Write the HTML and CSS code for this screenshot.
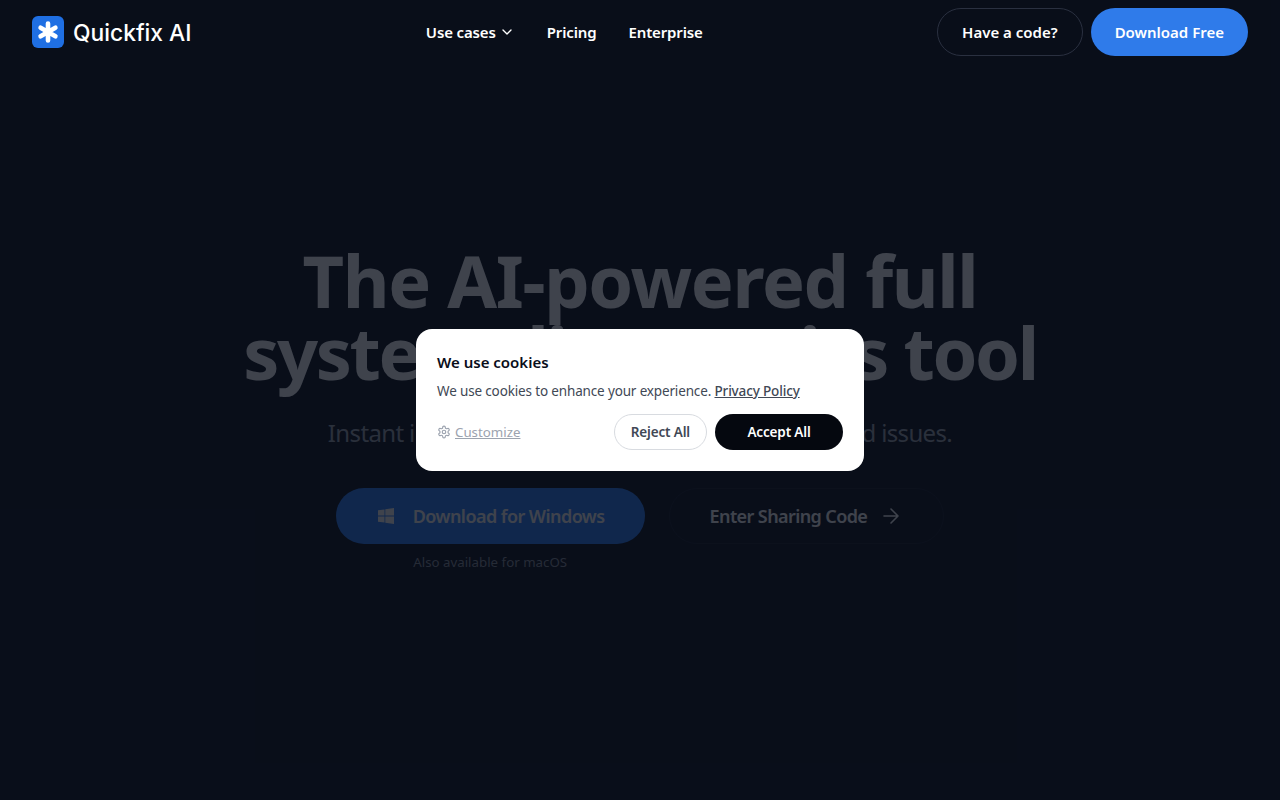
FILE: index.html
```html
<!DOCTYPE html>
<html lang="en">
<head>
<meta charset="utf-8">
<title>Quickfix AI</title>
<link rel="stylesheet" href="styles.css">
</head>
<body>
<header class="nav">
  <a class="brand">
    <svg class="logo" width="32" height="32" viewBox="0 0 32 32"><rect width="32" height="32" rx="6" fill="#1f6fe3"/><path d="M16 7.5v17M8.6 11.75l14.8 8.5M23.4 11.75l-14.8 8.5" stroke="#fff" stroke-width="4.6" stroke-linecap="round"/></svg>
    <span>Quickfix AI</span>
  </a>
  <nav class="links">
    <a class="link">Use cases
      <svg width="16" height="16" viewBox="0 0 24 24" fill="none" stroke="currentColor" stroke-width="2" stroke-linecap="round" stroke-linejoin="round"><path d="M6 9l6 6 6-6"/></svg>
    </a>
    <a class="link">Pricing</a>
    <a class="link">Enterprise</a>
  </nav>
  <div class="actions">
    <a class="btn ghost">Have a code?</a>
    <a class="btn primary">Download Free</a>
  </div>
</header>
<main class="hero">
  <h1><span class="line-one">The AI-powered full</span><span class="line-two">system diagnostics tool</span></h1>
  <p class="sub">Instant insights into hardware and software-related issues.</p>
  <div class="cta">
    <div class="cta-col">
      <a class="big blue">
        <svg width="20" height="20" viewBox="-2 -2 20 20" fill="currentColor"><path d="M0 2.3l6.5-.9v6.2H0zM7.3 1.3L16 0v7.6H7.3zM0 8.4h6.5v6.2L0 13.7zM7.3 8.4H16V16l-8.7-1.2z"/></svg>
        <span class="label-win">Download for Windows</span>
      </a>
      <span class="also">Also available for macOS</span>
    </div>
    <a class="big outline"><span class="label-code">Enter Sharing Code</span>
      <svg width="24" height="24" viewBox="0 0 24 24" fill="none" stroke="currentColor" stroke-width="1.6" stroke-linecap="round" stroke-linejoin="round"><path d="M5 12h14M12 5l7 7-7 7"/></svg>
    </a>
  </div>
</main>
<div class="scrim"></div>
<div class="cookie">
  <h2>We use cookies</h2>
  <p>We use cookies to enhance your experience. <a>Privacy Policy</a></p>
  <div class="row">
    <a class="custom">
      <svg width="14" height="14" viewBox="0 0 24 24" fill="none" stroke="currentColor" stroke-width="2" stroke-linecap="round" stroke-linejoin="round"><path d="M12.22 2h-.44a2 2 0 0 0-2 2v.18a2 2 0 0 1-1 1.73l-.43.25a2 2 0 0 1-2 0l-.15-.08a2 2 0 0 0-2.73.73l-.22.38a2 2 0 0 0 .73 2.73l.15.1a2 2 0 0 1 1 1.72v.51a2 2 0 0 1-1 1.74l-.15.09a2 2 0 0 0-.73 2.73l.22.38a2 2 0 0 0 2.73.73l.15-.08a2 2 0 0 1 2 0l.43.25a2 2 0 0 1 1 1.73V20a2 2 0 0 0 2 2h.44a2 2 0 0 0 2-2v-.18a2 2 0 0 1 1-1.73l.43-.25a2 2 0 0 1 2 0l.15.08a2 2 0 0 0 2.73-.73l.22-.39a2 2 0 0 0-.73-2.73l-.15-.08a2 2 0 0 1-1-1.74v-.5a2 2 0 0 1 1-1.74l.15-.09a2 2 0 0 0 .73-2.73l-.22-.38a2 2 0 0 0-2.73-.73l-.15.08a2 2 0 0 1-2 0l-.43-.25a2 2 0 0 1-1-1.73V4a2 2 0 0 0-2-2z"/><circle cx="12" cy="12" r="3"/></svg>
      <span>Customize</span>
    </a>
    <div class="choices">
      <button class="reject">Reject All</button>
      <button class="accept">Accept All</button>
    </div>
  </div>
</div>
</body>
</html>
```
FILE: styles.css
```css
* { box-sizing: border-box; }
html, body { margin: 0; height: 100%; }
body { background: #090e1a; color: #fff; font-family: "Noto Sans", sans-serif; height: 800px; overflow: hidden; }
a { color: inherit; text-decoration: none; }
.nav { position: relative; z-index: 2; height: 64px; padding: 8px 32px; display: flex; justify-content: space-between; align-items: center; }
.brand { display: flex; align-items: center; gap: 9px; font-family: Inter, sans-serif; font-size: 22.8px; font-weight: 500; }
.logo { display: block; }
.links { display: flex; gap: 32px; font-size: 15px; font-weight: 600; letter-spacing: -.14px; }
.link { display: flex; align-items: center; gap: 3px; }
.actions { display: flex; gap: 8px; }
.btn { height: 48px; border-radius: 24px; display: flex; align-items: center; padding: 0 24px; font-size: 15px; font-weight: 600; }
.ghost { border: 1px solid #2a3040; }
.primary { background: #2f7bea; }
.hero { display: flex; flex-direction: column; align-items: center; padding-top: 180px; }
h1 { margin: 0; font-size: 72px; line-height: 72px; font-weight: 700; text-align: center; }
.line-one, .line-two { display: block; white-space: nowrap; }
.line-one { letter-spacing: -1.32px; }
.line-two { letter-spacing: -2.35px; }
.sub { margin: 29px 0 0; font-size: 24px; line-height: 32px; color: #a1a7b3; letter-spacing: -.64px; white-space: nowrap; }
.cta { display: flex; gap: 24px; margin-top: 39px; align-items: flex-start; }
.cta-col { display: flex; flex-direction: column; align-items: center; gap: 8px; }
.big { height: 56px; border-radius: 28px; display: flex; align-items: center; font-size: 18px; font-weight: 600; padding: 0 40px; white-space: nowrap; }
.label-win { letter-spacing: -.55px; }
.label-code { letter-spacing: -.6px; }
.blue { background: #2a80ff; gap: 17px; }
.outline { border: 1px solid #171c28; gap: 12px; }
.also { font-size: 13.3px; line-height: 20px; color: #8b909c; }
.scrim { position: absolute; inset: 0; z-index: 1; background: rgba(9,14,26,.78); }
.cookie { position: absolute; z-index: 3; left: 416px; top: 329px; width: 448px; height: 142px; background: #fff; border-radius: 16px; padding: 21px; color: #0a0e1a; }
.cookie h2 { margin: 0; font-size: 15px; line-height: 24px; font-weight: 600; }
.cookie p { margin: 8px 0 0; font-size: 13.5px; line-height: 18px; color: #414855; letter-spacing: -.15px; }
.cookie p a { text-decoration: underline; font-weight: 500; }
.row { display: flex; justify-content: space-between; align-items: center; margin-top: 14px; }
.custom { display: flex; align-items: center; gap: 4px; font-size: 13.3px; color: #9ca3af; }
.custom span { text-decoration: underline; }
.choices { display: flex; gap: 8px; }
.choices button { height: 36px; border-radius: 18px; font-family: inherit; font-size: 13.5px; font-weight: 600; padding: 0 16px; letter-spacing: -.15px; }
.reject { background: #fff; border: 1px solid #d8dbe0; color: #414855; }
.accept { background: #05080f; border: 0; color: #fff; width: 128px; }
```
